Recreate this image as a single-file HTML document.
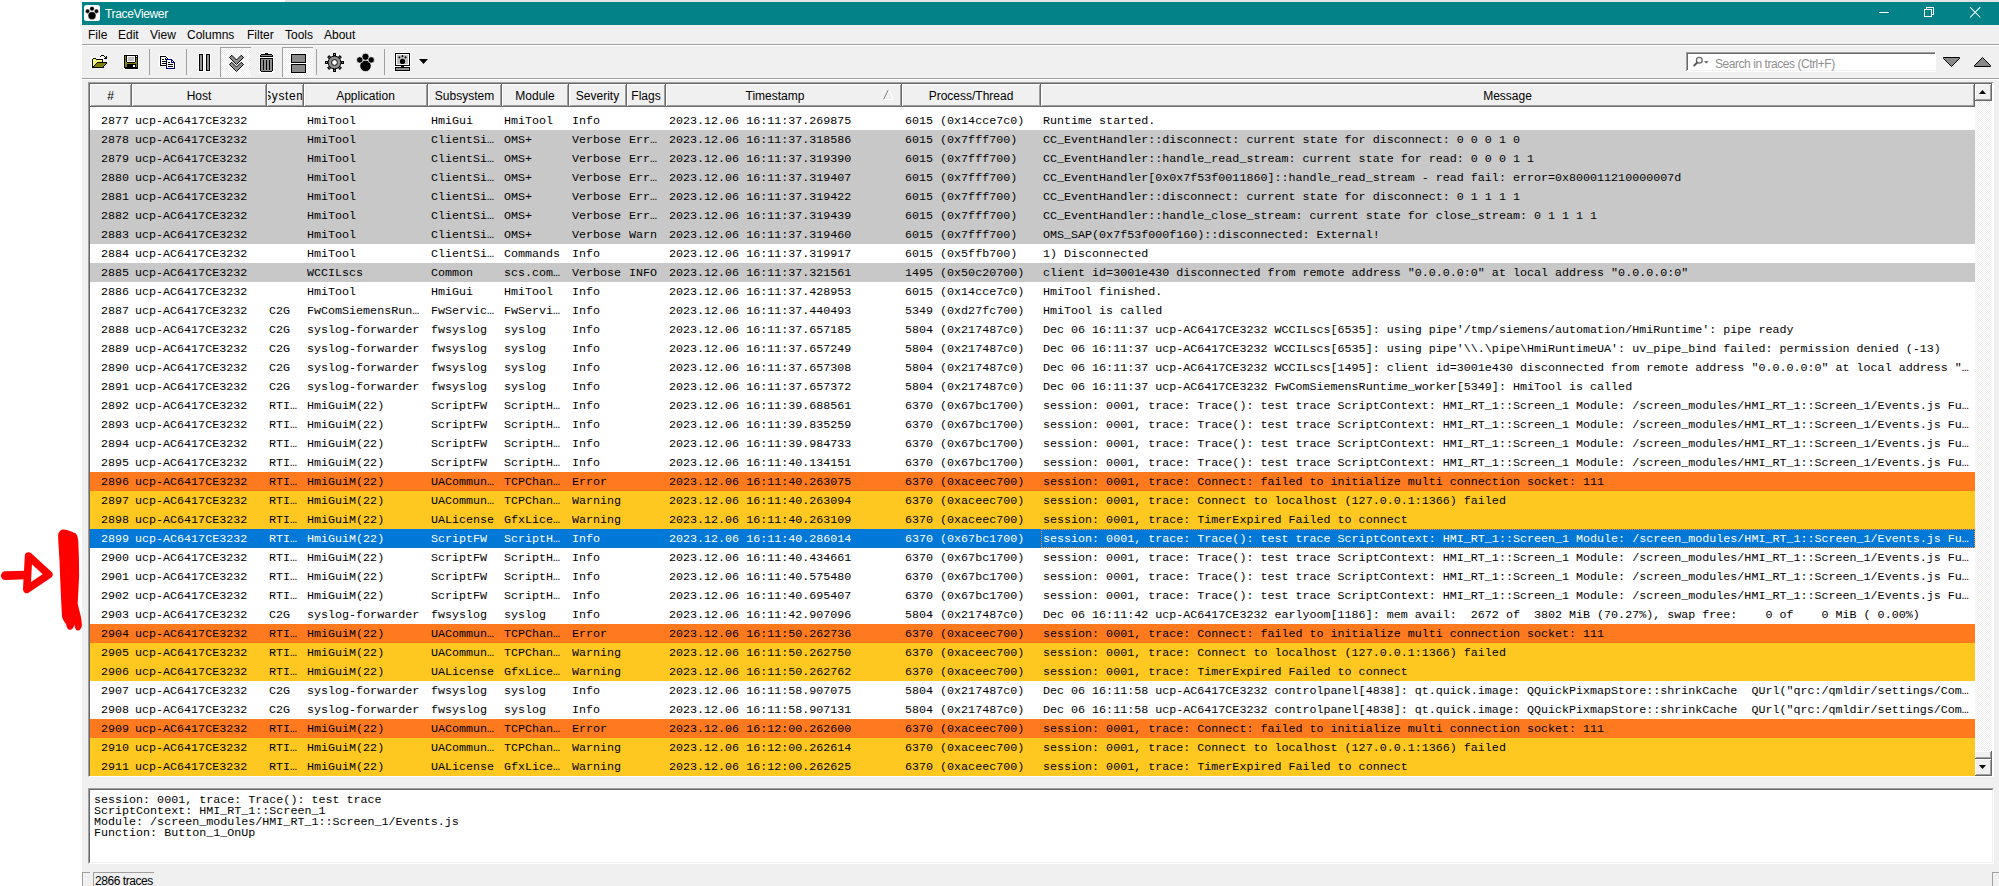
<!DOCTYPE html>
<html><head><meta charset="utf-8"><style>
*{margin:0;padding:0;box-sizing:border-box}
html,body{width:1999px;height:886px;overflow:hidden;background:#fff;position:relative}
body{font-family:"Liberation Sans",sans-serif;font-size:12px;color:#000}
.a{position:absolute}
.mono{font-family:"Liberation Mono",monospace;font-size:11.69px;white-space:pre}
.hc{position:absolute;top:84px;height:22px;background:#f0f0f0;border-top:1px solid #fff;border-left:1px solid #fff;box-shadow:inset -1px -1px 0 #a0a0a0;}
.ht{position:absolute;left:0;right:0;top:4px;text-align:center;white-space:nowrap;overflow:hidden;line-height:14px}
.row{position:absolute;left:90px;width:1885px;height:19px}
.row span{position:absolute;top:1px;line-height:19px;overflow:hidden}
.w{background:#fff}.g{background:#c8c8c8}.o{background:#ff7a1f}.y{background:#ffc820}.s{background:#0078d7;color:#fff}
.mi{position:absolute;top:28px;line-height:14px}
</style></head><body>

<div class="a" style="left:285px;top:0;width:1714px;height:2px;background:#e4e4e6"></div>
<div class="a" style="left:82px;top:2px;width:1917px;height:884px;background:#f0f0f0"></div>
<div class="a" style="left:82px;top:2px;width:1917px;height:23px;background:#038387"></div>
<div class="a" style="left:105px;top:6px;color:#fff;line-height:16px;letter-spacing:-0.35px">TraceViewer</div>
<div class="mi" style="left:88px">File</div>
<div class="mi" style="left:118px">Edit</div>
<div class="mi" style="left:150px">View</div>
<div class="mi" style="left:187px">Columns</div>
<div class="mi" style="left:247px">Filter</div>
<div class="mi" style="left:285px">Tools</div>
<div class="mi" style="left:324px">About</div>
<div class="a" style="left:82px;top:44px;width:1917px;height:1px;background:#a0a0a0"></div>
<div class="a" style="left:82px;top:45px;width:1917px;height:1px;background:#fff"></div>
<div class="a" style="left:82px;top:78px;width:1917px;height:1px;background:#a0a0a0"></div>
<div class="a" style="left:82px;top:79px;width:1917px;height:1px;background:#fff"></div>
<div class="a" style="left:88px;top:82px;width:1906px;height:695px;background:#fff;border-top:1px solid #a0a0a0;border-left:1px solid #a0a0a0;border-right:1px solid #fff;border-bottom:1px solid #fff"></div>
<div class="a" style="left:89px;top:83px;width:1903px;height:693px;border-top:1px solid #696969;border-left:1px solid #696969"></div>
<div class="hc" style="left:90px;width:41px;"></div>
<div class="a" style="left:91px;top:85px;width:39px;height:20px;overflow:hidden"><div class="ht" style="top:4px;left:-60px;right:-60px;">#</div></div>
<div class="a" style="left:131px;top:83px;width:1px;height:24px;background:#696969"></div>
<div class="hc" style="left:132px;width:134px;"></div>
<div class="a" style="left:133px;top:85px;width:132px;height:20px;overflow:hidden"><div class="ht" style="top:4px;left:-60px;right:-60px;">Host</div></div>
<div class="a" style="left:266px;top:83px;width:1px;height:24px;background:#696969"></div>
<div class="hc" style="left:267px;width:36px;"></div>
<div class="a" style="left:268px;top:85px;width:34px;height:20px;overflow:hidden"><div class="ht" style="top:4px;left:-60px;right:-60px;letter-spacing:0.6px;">System</div></div>
<div class="a" style="left:303px;top:83px;width:1px;height:24px;background:#696969"></div>
<div class="hc" style="left:304px;width:123px;"></div>
<div class="a" style="left:305px;top:85px;width:121px;height:20px;overflow:hidden"><div class="ht" style="top:4px;left:-60px;right:-60px;">Application</div></div>
<div class="a" style="left:427px;top:83px;width:1px;height:24px;background:#696969"></div>
<div class="hc" style="left:428px;width:73px;"></div>
<div class="a" style="left:429px;top:85px;width:71px;height:20px;overflow:hidden"><div class="ht" style="top:4px;left:-60px;right:-60px;">Subsystem</div></div>
<div class="a" style="left:501px;top:83px;width:1px;height:24px;background:#696969"></div>
<div class="hc" style="left:502px;width:66px;"></div>
<div class="a" style="left:503px;top:85px;width:64px;height:20px;overflow:hidden"><div class="ht" style="top:4px;left:-60px;right:-60px;">Module</div></div>
<div class="a" style="left:568px;top:83px;width:1px;height:24px;background:#696969"></div>
<div class="hc" style="left:569px;width:57px;"></div>
<div class="a" style="left:570px;top:85px;width:55px;height:20px;overflow:hidden"><div class="ht" style="top:4px;left:-60px;right:-60px;">Severity</div></div>
<div class="a" style="left:626px;top:83px;width:1px;height:24px;background:#696969"></div>
<div class="hc" style="left:627px;width:38px;"></div>
<div class="a" style="left:628px;top:85px;width:36px;height:20px;overflow:hidden"><div class="ht" style="top:4px;left:-60px;right:-60px;">Flags</div></div>
<div class="a" style="left:665px;top:83px;width:1px;height:24px;background:#696969"></div>
<div class="hc" style="left:666px;width:235px;"></div>
<div class="a" style="left:667px;top:85px;width:216px;height:20px;overflow:hidden"><div class="ht" style="top:4px;left:-60px;right:-60px;">Timestamp</div></div>
<div class="a" style="left:901px;top:83px;width:1px;height:24px;background:#696969"></div>
<div class="hc" style="left:902px;width:138px;"></div>
<div class="a" style="left:903px;top:85px;width:136px;height:20px;overflow:hidden"><div class="ht" style="top:4px;left:-60px;right:-60px;">Process/Thread</div></div>
<div class="a" style="left:1040px;top:83px;width:1px;height:24px;background:#696969"></div>
<div class="hc" style="left:1041px;width:933px;"></div>
<div class="a" style="left:1042px;top:85px;width:931px;height:20px;overflow:hidden"><div class="ht" style="top:4px;left:-60px;right:-60px;">Message</div></div>
<div class="a" style="left:1974px;top:83px;width:1px;height:24px;background:#696969"></div>
<div class="a" style="left:90px;top:106px;width:1885px;height:1px;background:#696969"></div>
<div class="row mono w" style="top:111px"><span style="left:11px;width:29px">2877</span><span style="left:45px;width:130px">ucp-AC6417CE3232</span><span style="left:217px;width:119px">HmiTool</span><span style="left:341px;width:69px">HmiGui</span><span style="left:414px;width:63px">HmiTool</span><span style="left:482px;width:53px">Info</span><span style="left:579px;width:231px">2023.12.06 16:11:37.269875</span><span style="left:815px;width:134px">6015 (0x14cce7c0)</span><span style="left:953px;width:930px">Runtime started.</span></div>
<div class="row mono g" style="top:130px"><span style="left:11px;width:29px">2878</span><span style="left:45px;width:130px">ucp-AC6417CE3232</span><span style="left:217px;width:119px">HmiTool</span><span style="left:341px;width:69px">ClientSi…</span><span style="left:414px;width:63px">OMS+</span><span style="left:482px;width:53px">Verbose</span><span style="left:539px;width:35px">Err…</span><span style="left:579px;width:231px">2023.12.06 16:11:37.318586</span><span style="left:815px;width:134px">6015 (0x7fff700)</span><span style="left:953px;width:930px">CC_EventHandler::disconnect: current state for disconnect: 0 0 0 1 0</span></div>
<div class="row mono g" style="top:149px"><span style="left:11px;width:29px">2879</span><span style="left:45px;width:130px">ucp-AC6417CE3232</span><span style="left:217px;width:119px">HmiTool</span><span style="left:341px;width:69px">ClientSi…</span><span style="left:414px;width:63px">OMS+</span><span style="left:482px;width:53px">Verbose</span><span style="left:539px;width:35px">Err…</span><span style="left:579px;width:231px">2023.12.06 16:11:37.319390</span><span style="left:815px;width:134px">6015 (0x7fff700)</span><span style="left:953px;width:930px">CC_EventHandler::handle_read_stream: current state for read: 0 0 0 1 1</span></div>
<div class="row mono g" style="top:168px"><span style="left:11px;width:29px">2880</span><span style="left:45px;width:130px">ucp-AC6417CE3232</span><span style="left:217px;width:119px">HmiTool</span><span style="left:341px;width:69px">ClientSi…</span><span style="left:414px;width:63px">OMS+</span><span style="left:482px;width:53px">Verbose</span><span style="left:539px;width:35px">Err…</span><span style="left:579px;width:231px">2023.12.06 16:11:37.319407</span><span style="left:815px;width:134px">6015 (0x7fff700)</span><span style="left:953px;width:930px">CC_EventHandler[0x0x7f53f0011860]::handle_read_stream - read fail: error=0x800011210000007d</span></div>
<div class="row mono g" style="top:187px"><span style="left:11px;width:29px">2881</span><span style="left:45px;width:130px">ucp-AC6417CE3232</span><span style="left:217px;width:119px">HmiTool</span><span style="left:341px;width:69px">ClientSi…</span><span style="left:414px;width:63px">OMS+</span><span style="left:482px;width:53px">Verbose</span><span style="left:539px;width:35px">Err…</span><span style="left:579px;width:231px">2023.12.06 16:11:37.319422</span><span style="left:815px;width:134px">6015 (0x7fff700)</span><span style="left:953px;width:930px">CC_EventHandler::disconnect: current state for disconnect: 0 1 1 1 1</span></div>
<div class="row mono g" style="top:206px"><span style="left:11px;width:29px">2882</span><span style="left:45px;width:130px">ucp-AC6417CE3232</span><span style="left:217px;width:119px">HmiTool</span><span style="left:341px;width:69px">ClientSi…</span><span style="left:414px;width:63px">OMS+</span><span style="left:482px;width:53px">Verbose</span><span style="left:539px;width:35px">Err…</span><span style="left:579px;width:231px">2023.12.06 16:11:37.319439</span><span style="left:815px;width:134px">6015 (0x7fff700)</span><span style="left:953px;width:930px">CC_EventHandler::handle_close_stream: current state for close_stream: 0 1 1 1 1</span></div>
<div class="row mono g" style="top:225px"><span style="left:11px;width:29px">2883</span><span style="left:45px;width:130px">ucp-AC6417CE3232</span><span style="left:217px;width:119px">HmiTool</span><span style="left:341px;width:69px">ClientSi…</span><span style="left:414px;width:63px">OMS+</span><span style="left:482px;width:53px">Verbose</span><span style="left:539px;width:35px">Warn</span><span style="left:579px;width:231px">2023.12.06 16:11:37.319460</span><span style="left:815px;width:134px">6015 (0x7fff700)</span><span style="left:953px;width:930px">OMS_SAP(0x7f53f000f160)::disconnected: External!</span></div>
<div class="row mono w" style="top:244px"><span style="left:11px;width:29px">2884</span><span style="left:45px;width:130px">ucp-AC6417CE3232</span><span style="left:217px;width:119px">HmiTool</span><span style="left:341px;width:69px">ClientSi…</span><span style="left:414px;width:63px">Commands</span><span style="left:482px;width:53px">Info</span><span style="left:579px;width:231px">2023.12.06 16:11:37.319917</span><span style="left:815px;width:134px">6015 (0x5ffb700)</span><span style="left:953px;width:930px">1) Disconnected</span></div>
<div class="row mono g" style="top:263px"><span style="left:11px;width:29px">2885</span><span style="left:45px;width:130px">ucp-AC6417CE3232</span><span style="left:217px;width:119px">WCCILscs</span><span style="left:341px;width:69px">Common</span><span style="left:414px;width:63px">scs.com…</span><span style="left:482px;width:53px">Verbose</span><span style="left:539px;width:35px">INFO</span><span style="left:579px;width:231px">2023.12.06 16:11:37.321561</span><span style="left:815px;width:134px">1495 (0x50c20700)</span><span style="left:953px;width:930px">client id=3001e430 disconnected from remote address "0.0.0.0:0" at local address "0.0.0.0:0"</span></div>
<div class="row mono w" style="top:282px"><span style="left:11px;width:29px">2886</span><span style="left:45px;width:130px">ucp-AC6417CE3232</span><span style="left:217px;width:119px">HmiTool</span><span style="left:341px;width:69px">HmiGui</span><span style="left:414px;width:63px">HmiTool</span><span style="left:482px;width:53px">Info</span><span style="left:579px;width:231px">2023.12.06 16:11:37.428953</span><span style="left:815px;width:134px">6015 (0x14cce7c0)</span><span style="left:953px;width:930px">HmiTool finished.</span></div>
<div class="row mono w" style="top:301px"><span style="left:11px;width:29px">2887</span><span style="left:45px;width:130px">ucp-AC6417CE3232</span><span style="left:179px;width:33px">C2G</span><span style="left:217px;width:119px">FwComSiemensRun…</span><span style="left:341px;width:69px">FwServic…</span><span style="left:414px;width:63px">FwServi…</span><span style="left:482px;width:53px">Info</span><span style="left:579px;width:231px">2023.12.06 16:11:37.440493</span><span style="left:815px;width:134px">5349 (0xd27fc700)</span><span style="left:953px;width:930px">HmiTool is called</span></div>
<div class="row mono w" style="top:320px"><span style="left:11px;width:29px">2888</span><span style="left:45px;width:130px">ucp-AC6417CE3232</span><span style="left:179px;width:33px">C2G</span><span style="left:217px;width:119px">syslog-forwarder</span><span style="left:341px;width:69px">fwsyslog</span><span style="left:414px;width:63px">syslog</span><span style="left:482px;width:53px">Info</span><span style="left:579px;width:231px">2023.12.06 16:11:37.657185</span><span style="left:815px;width:134px">5804 (0x217487c0)</span><span style="left:953px;width:930px">Dec 06 16:11:37 ucp-AC6417CE3232 WCCILscs[6535]: using pipe'/tmp/siemens/automation/HmiRuntime': pipe ready</span></div>
<div class="row mono w" style="top:339px"><span style="left:11px;width:29px">2889</span><span style="left:45px;width:130px">ucp-AC6417CE3232</span><span style="left:179px;width:33px">C2G</span><span style="left:217px;width:119px">syslog-forwarder</span><span style="left:341px;width:69px">fwsyslog</span><span style="left:414px;width:63px">syslog</span><span style="left:482px;width:53px">Info</span><span style="left:579px;width:231px">2023.12.06 16:11:37.657249</span><span style="left:815px;width:134px">5804 (0x217487c0)</span><span style="left:953px;width:930px">Dec 06 16:11:37 ucp-AC6417CE3232 WCCILscs[6535]: using pipe'\\.\pipe\HmiRuntimeUA': uv_pipe_bind failed: permission denied (-13)</span></div>
<div class="row mono w" style="top:358px"><span style="left:11px;width:29px">2890</span><span style="left:45px;width:130px">ucp-AC6417CE3232</span><span style="left:179px;width:33px">C2G</span><span style="left:217px;width:119px">syslog-forwarder</span><span style="left:341px;width:69px">fwsyslog</span><span style="left:414px;width:63px">syslog</span><span style="left:482px;width:53px">Info</span><span style="left:579px;width:231px">2023.12.06 16:11:37.657308</span><span style="left:815px;width:134px">5804 (0x217487c0)</span><span style="left:953px;width:930px">Dec 06 16:11:37 ucp-AC6417CE3232 WCCILscs[1495]: client id=3001e430 disconnected from remote address "0.0.0.0:0" at local address "…</span></div>
<div class="row mono w" style="top:377px"><span style="left:11px;width:29px">2891</span><span style="left:45px;width:130px">ucp-AC6417CE3232</span><span style="left:179px;width:33px">C2G</span><span style="left:217px;width:119px">syslog-forwarder</span><span style="left:341px;width:69px">fwsyslog</span><span style="left:414px;width:63px">syslog</span><span style="left:482px;width:53px">Info</span><span style="left:579px;width:231px">2023.12.06 16:11:37.657372</span><span style="left:815px;width:134px">5804 (0x217487c0)</span><span style="left:953px;width:930px">Dec 06 16:11:37 ucp-AC6417CE3232 FwComSiemensRuntime_worker[5349]: HmiTool is called</span></div>
<div class="row mono w" style="top:396px"><span style="left:11px;width:29px">2892</span><span style="left:45px;width:130px">ucp-AC6417CE3232</span><span style="left:179px;width:33px">RTI…</span><span style="left:217px;width:119px">HmiGuiM(22)</span><span style="left:341px;width:69px">ScriptFW</span><span style="left:414px;width:63px">ScriptH…</span><span style="left:482px;width:53px">Info</span><span style="left:579px;width:231px">2023.12.06 16:11:39.688561</span><span style="left:815px;width:134px">6370 (0x67bc1700)</span><span style="left:953px;width:930px">session: 0001, trace: Trace(): test trace ScriptContext: HMI_RT_1::Screen_1 Module: /screen_modules/HMI_RT_1::Screen_1/Events.js Fu…</span></div>
<div class="row mono w" style="top:415px"><span style="left:11px;width:29px">2893</span><span style="left:45px;width:130px">ucp-AC6417CE3232</span><span style="left:179px;width:33px">RTI…</span><span style="left:217px;width:119px">HmiGuiM(22)</span><span style="left:341px;width:69px">ScriptFW</span><span style="left:414px;width:63px">ScriptH…</span><span style="left:482px;width:53px">Info</span><span style="left:579px;width:231px">2023.12.06 16:11:39.835259</span><span style="left:815px;width:134px">6370 (0x67bc1700)</span><span style="left:953px;width:930px">session: 0001, trace: Trace(): test trace ScriptContext: HMI_RT_1::Screen_1 Module: /screen_modules/HMI_RT_1::Screen_1/Events.js Fu…</span></div>
<div class="row mono w" style="top:434px"><span style="left:11px;width:29px">2894</span><span style="left:45px;width:130px">ucp-AC6417CE3232</span><span style="left:179px;width:33px">RTI…</span><span style="left:217px;width:119px">HmiGuiM(22)</span><span style="left:341px;width:69px">ScriptFW</span><span style="left:414px;width:63px">ScriptH…</span><span style="left:482px;width:53px">Info</span><span style="left:579px;width:231px">2023.12.06 16:11:39.984733</span><span style="left:815px;width:134px">6370 (0x67bc1700)</span><span style="left:953px;width:930px">session: 0001, trace: Trace(): test trace ScriptContext: HMI_RT_1::Screen_1 Module: /screen_modules/HMI_RT_1::Screen_1/Events.js Fu…</span></div>
<div class="row mono w" style="top:453px"><span style="left:11px;width:29px">2895</span><span style="left:45px;width:130px">ucp-AC6417CE3232</span><span style="left:179px;width:33px">RTI…</span><span style="left:217px;width:119px">HmiGuiM(22)</span><span style="left:341px;width:69px">ScriptFW</span><span style="left:414px;width:63px">ScriptH…</span><span style="left:482px;width:53px">Info</span><span style="left:579px;width:231px">2023.12.06 16:11:40.134151</span><span style="left:815px;width:134px">6370 (0x67bc1700)</span><span style="left:953px;width:930px">session: 0001, trace: Trace(): test trace ScriptContext: HMI_RT_1::Screen_1 Module: /screen_modules/HMI_RT_1::Screen_1/Events.js Fu…</span></div>
<div class="row mono o" style="top:472px"><span style="left:11px;width:29px">2896</span><span style="left:45px;width:130px">ucp-AC6417CE3232</span><span style="left:179px;width:33px">RTI…</span><span style="left:217px;width:119px">HmiGuiM(22)</span><span style="left:341px;width:69px">UACommun…</span><span style="left:414px;width:63px">TCPChan…</span><span style="left:482px;width:53px">Error</span><span style="left:579px;width:231px">2023.12.06 16:11:40.263075</span><span style="left:815px;width:134px">6370 (0xaceec700)</span><span style="left:953px;width:930px">session: 0001, trace: Connect: failed to initialize multi connection socket: 111</span></div>
<div class="row mono y" style="top:491px"><span style="left:11px;width:29px">2897</span><span style="left:45px;width:130px">ucp-AC6417CE3232</span><span style="left:179px;width:33px">RTI…</span><span style="left:217px;width:119px">HmiGuiM(22)</span><span style="left:341px;width:69px">UACommun…</span><span style="left:414px;width:63px">TCPChan…</span><span style="left:482px;width:53px">Warning</span><span style="left:579px;width:231px">2023.12.06 16:11:40.263094</span><span style="left:815px;width:134px">6370 (0xaceec700)</span><span style="left:953px;width:930px">session: 0001, trace: Connect to localhost (127.0.0.1:1366) failed</span></div>
<div class="row mono y" style="top:510px"><span style="left:11px;width:29px">2898</span><span style="left:45px;width:130px">ucp-AC6417CE3232</span><span style="left:179px;width:33px">RTI…</span><span style="left:217px;width:119px">HmiGuiM(22)</span><span style="left:341px;width:69px">UALicense</span><span style="left:414px;width:63px">GfxLice…</span><span style="left:482px;width:53px">Warning</span><span style="left:579px;width:231px">2023.12.06 16:11:40.263109</span><span style="left:815px;width:134px">6370 (0xaceec700)</span><span style="left:953px;width:930px">session: 0001, trace: TimerExpired Failed to connect</span></div>
<div class="row mono s" style="top:529px"><span style="left:11px;width:29px">2899</span><span style="left:45px;width:130px">ucp-AC6417CE3232</span><span style="left:179px;width:33px">RTI…</span><span style="left:217px;width:119px">HmiGuiM(22)</span><span style="left:341px;width:69px">ScriptFW</span><span style="left:414px;width:63px">ScriptH…</span><span style="left:482px;width:53px">Info</span><span style="left:579px;width:231px">2023.12.06 16:11:40.286014</span><span style="left:815px;width:134px">6370 (0x67bc1700)</span><span style="left:953px;width:930px">session: 0001, trace: Trace(): test trace ScriptContext: HMI_RT_1::Screen_1 Module: /screen_modules/HMI_RT_1::Screen_1/Events.js Fu…</span></div>
<div class="row mono w" style="top:548px"><span style="left:11px;width:29px">2900</span><span style="left:45px;width:130px">ucp-AC6417CE3232</span><span style="left:179px;width:33px">RTI…</span><span style="left:217px;width:119px">HmiGuiM(22)</span><span style="left:341px;width:69px">ScriptFW</span><span style="left:414px;width:63px">ScriptH…</span><span style="left:482px;width:53px">Info</span><span style="left:579px;width:231px">2023.12.06 16:11:40.434661</span><span style="left:815px;width:134px">6370 (0x67bc1700)</span><span style="left:953px;width:930px">session: 0001, trace: Trace(): test trace ScriptContext: HMI_RT_1::Screen_1 Module: /screen_modules/HMI_RT_1::Screen_1/Events.js Fu…</span></div>
<div class="row mono w" style="top:567px"><span style="left:11px;width:29px">2901</span><span style="left:45px;width:130px">ucp-AC6417CE3232</span><span style="left:179px;width:33px">RTI…</span><span style="left:217px;width:119px">HmiGuiM(22)</span><span style="left:341px;width:69px">ScriptFW</span><span style="left:414px;width:63px">ScriptH…</span><span style="left:482px;width:53px">Info</span><span style="left:579px;width:231px">2023.12.06 16:11:40.575480</span><span style="left:815px;width:134px">6370 (0x67bc1700)</span><span style="left:953px;width:930px">session: 0001, trace: Trace(): test trace ScriptContext: HMI_RT_1::Screen_1 Module: /screen_modules/HMI_RT_1::Screen_1/Events.js Fu…</span></div>
<div class="row mono w" style="top:586px"><span style="left:11px;width:29px">2902</span><span style="left:45px;width:130px">ucp-AC6417CE3232</span><span style="left:179px;width:33px">RTI…</span><span style="left:217px;width:119px">HmiGuiM(22)</span><span style="left:341px;width:69px">ScriptFW</span><span style="left:414px;width:63px">ScriptH…</span><span style="left:482px;width:53px">Info</span><span style="left:579px;width:231px">2023.12.06 16:11:40.695407</span><span style="left:815px;width:134px">6370 (0x67bc1700)</span><span style="left:953px;width:930px">session: 0001, trace: Trace(): test trace ScriptContext: HMI_RT_1::Screen_1 Module: /screen_modules/HMI_RT_1::Screen_1/Events.js Fu…</span></div>
<div class="row mono w" style="top:605px"><span style="left:11px;width:29px">2903</span><span style="left:45px;width:130px">ucp-AC6417CE3232</span><span style="left:179px;width:33px">C2G</span><span style="left:217px;width:119px">syslog-forwarder</span><span style="left:341px;width:69px">fwsyslog</span><span style="left:414px;width:63px">syslog</span><span style="left:482px;width:53px">Info</span><span style="left:579px;width:231px">2023.12.06 16:11:42.907096</span><span style="left:815px;width:134px">5804 (0x217487c0)</span><span style="left:953px;width:930px">Dec 06 16:11:42 ucp-AC6417CE3232 earlyoom[1186]: mem avail:  2672 of  3802 MiB (70.27%), swap free:    0 of    0 MiB ( 0.00%)</span></div>
<div class="row mono o" style="top:624px"><span style="left:11px;width:29px">2904</span><span style="left:45px;width:130px">ucp-AC6417CE3232</span><span style="left:179px;width:33px">RTI…</span><span style="left:217px;width:119px">HmiGuiM(22)</span><span style="left:341px;width:69px">UACommun…</span><span style="left:414px;width:63px">TCPChan…</span><span style="left:482px;width:53px">Error</span><span style="left:579px;width:231px">2023.12.06 16:11:50.262736</span><span style="left:815px;width:134px">6370 (0xaceec700)</span><span style="left:953px;width:930px">session: 0001, trace: Connect: failed to initialize multi connection socket: 111</span></div>
<div class="row mono y" style="top:643px"><span style="left:11px;width:29px">2905</span><span style="left:45px;width:130px">ucp-AC6417CE3232</span><span style="left:179px;width:33px">RTI…</span><span style="left:217px;width:119px">HmiGuiM(22)</span><span style="left:341px;width:69px">UACommun…</span><span style="left:414px;width:63px">TCPChan…</span><span style="left:482px;width:53px">Warning</span><span style="left:579px;width:231px">2023.12.06 16:11:50.262750</span><span style="left:815px;width:134px">6370 (0xaceec700)</span><span style="left:953px;width:930px">session: 0001, trace: Connect to localhost (127.0.0.1:1366) failed</span></div>
<div class="row mono y" style="top:662px"><span style="left:11px;width:29px">2906</span><span style="left:45px;width:130px">ucp-AC6417CE3232</span><span style="left:179px;width:33px">RTI…</span><span style="left:217px;width:119px">HmiGuiM(22)</span><span style="left:341px;width:69px">UALicense</span><span style="left:414px;width:63px">GfxLice…</span><span style="left:482px;width:53px">Warning</span><span style="left:579px;width:231px">2023.12.06 16:11:50.262762</span><span style="left:815px;width:134px">6370 (0xaceec700)</span><span style="left:953px;width:930px">session: 0001, trace: TimerExpired Failed to connect</span></div>
<div class="row mono w" style="top:681px"><span style="left:11px;width:29px">2907</span><span style="left:45px;width:130px">ucp-AC6417CE3232</span><span style="left:179px;width:33px">C2G</span><span style="left:217px;width:119px">syslog-forwarder</span><span style="left:341px;width:69px">fwsyslog</span><span style="left:414px;width:63px">syslog</span><span style="left:482px;width:53px">Info</span><span style="left:579px;width:231px">2023.12.06 16:11:58.907075</span><span style="left:815px;width:134px">5804 (0x217487c0)</span><span style="left:953px;width:930px">Dec 06 16:11:58 ucp-AC6417CE3232 controlpanel[4838]: qt.quick.image: QQuickPixmapStore::shrinkCache  QUrl("qrc:/qmldir/settings/Com…</span></div>
<div class="row mono w" style="top:700px"><span style="left:11px;width:29px">2908</span><span style="left:45px;width:130px">ucp-AC6417CE3232</span><span style="left:179px;width:33px">C2G</span><span style="left:217px;width:119px">syslog-forwarder</span><span style="left:341px;width:69px">fwsyslog</span><span style="left:414px;width:63px">syslog</span><span style="left:482px;width:53px">Info</span><span style="left:579px;width:231px">2023.12.06 16:11:58.907131</span><span style="left:815px;width:134px">5804 (0x217487c0)</span><span style="left:953px;width:930px">Dec 06 16:11:58 ucp-AC6417CE3232 controlpanel[4838]: qt.quick.image: QQuickPixmapStore::shrinkCache  QUrl("qrc:/qmldir/settings/Com…</span></div>
<div class="row mono o" style="top:719px"><span style="left:11px;width:29px">2909</span><span style="left:45px;width:130px">ucp-AC6417CE3232</span><span style="left:179px;width:33px">RTI…</span><span style="left:217px;width:119px">HmiGuiM(22)</span><span style="left:341px;width:69px">UACommun…</span><span style="left:414px;width:63px">TCPChan…</span><span style="left:482px;width:53px">Error</span><span style="left:579px;width:231px">2023.12.06 16:12:00.262600</span><span style="left:815px;width:134px">6370 (0xaceec700)</span><span style="left:953px;width:930px">session: 0001, trace: Connect: failed to initialize multi connection socket: 111</span></div>
<div class="row mono y" style="top:738px"><span style="left:11px;width:29px">2910</span><span style="left:45px;width:130px">ucp-AC6417CE3232</span><span style="left:179px;width:33px">RTI…</span><span style="left:217px;width:119px">HmiGuiM(22)</span><span style="left:341px;width:69px">UACommun…</span><span style="left:414px;width:63px">TCPChan…</span><span style="left:482px;width:53px">Warning</span><span style="left:579px;width:231px">2023.12.06 16:12:00.262614</span><span style="left:815px;width:134px">6370 (0xaceec700)</span><span style="left:953px;width:930px">session: 0001, trace: Connect to localhost (127.0.0.1:1366) failed</span></div>
<div class="row mono y" style="top:757px"><span style="left:11px;width:29px">2911</span><span style="left:45px;width:130px">ucp-AC6417CE3232</span><span style="left:179px;width:33px">RTI…</span><span style="left:217px;width:119px">HmiGuiM(22)</span><span style="left:341px;width:69px">UALicense</span><span style="left:414px;width:63px">GfxLice…</span><span style="left:482px;width:53px">Warning</span><span style="left:579px;width:231px">2023.12.06 16:12:00.262625</span><span style="left:815px;width:134px">6370 (0xaceec700)</span><span style="left:953px;width:930px">session: 0001, trace: TimerExpired Failed to connect</span></div>
<div class="a" style="left:1041px;top:529px;width:934px;height:19px;border:1px dotted #ff8a28"></div>
<div class="a" style="left:88px;top:788px;width:1906px;height:76px;background:#fff;border-top:1px solid #a0a0a0;border-left:1px solid #a0a0a0;border-right:1px solid #fff;border-bottom:1px solid #fff"></div>
<div class="a" style="left:89px;top:789px;width:1904px;height:74px;border-top:1px solid #696969;border-left:1px solid #696969;border-right:1px solid #f0f0f0;border-bottom:1px solid #f0f0f0"></div>
<div class="a mono" style="left:94px;top:795px;line-height:11px">session: 0001, trace: Trace(): test trace
ScriptContext: HMI_RT_1::Screen_1
Module: /screen_modules/HMI_RT_1::Screen_1/Events.js
Function: Button_1_OnUp</div>
<div class="a" style="left:82px;top:872px;width:8px;height:14px;border-top:1px solid #a0a0a0;border-left:1px solid #a0a0a0"></div>
<div class="a" style="left:93px;top:872px;width:61px;height:14px;border-top:1px solid #a0a0a0;border-left:1px solid #a0a0a0"></div>
<div class="a" style="left:95px;top:874px;line-height:14px;letter-spacing:-0.45px">2866 traces</div>
<div class="a" style="left:1992px;top:872px;width:8px;height:14px;border-top:1px solid #a0a0a0;border-left:1px solid #a0a0a0"></div>
<svg class="a" style="left:0;top:0" width="1999" height="886" viewBox="0 0 1999 886"><defs><pattern id="ydith" width="2" height="2" patternUnits="userSpaceOnUse"><rect width="2" height="2" fill="#ffff00"/><rect x="1" y="0" width="1" height="1" fill="#fff"/><rect x="0" y="1" width="1" height="1" fill="#fff"/></pattern><pattern id="dith" width="2" height="2" patternUnits="userSpaceOnUse"><rect width="2" height="2" fill="#fff"/><rect width="1" height="1" fill="#eeeeee"/><rect x="1" y="1" width="1" height="1" fill="#eeeeee"/></pattern></defs><rect x="84" y="5" width="16" height="16" rx="2.5" fill="#fff"/><g fill="#000" stroke="#fff" stroke-width="0.5"><circle cx="92" cy="15.7" r="4"/><circle cx="92" cy="8.7" r="2.3"/><circle cx="87.6" cy="11.2" r="2.2"/><circle cx="96.4" cy="11.2" r="2.2"/></g><rect x="1879" y="12" width="10" height="1" fill="#fff"/><g fill="none" stroke="#fff" stroke-width="1" shape-rendering="crispEdges"><rect x="1924.5" y="9.5" width="7" height="7"/><path d="M1926.5 9V7.5H1933.5V14.5H1932"/></g><path d="M1970 7.2L1980.3 17.5M1980.3 7.2L1970 17.5" stroke="#fff" stroke-width="1.05" fill="none"/><g shape-rendering="crispEdges"><path d="M91 57h5v1h4v-3h4v2h3v3h-4v1h4v2l-4 5h-12z" fill="#fff" opacity="0.85"/><rect x="101" y="55" width="3" height="1" fill="#000"/><rect x="100" y="56" width="1" height="1" fill="#000"/><rect x="104" y="56" width="1" height="1" fill="#000"/><rect x="106" y="56" width="1" height="1" fill="#000"/><rect x="105" y="57" width="2" height="1" fill="#000"/><rect x="93" y="58" width="3" height="1" fill="#000"/><rect x="104" y="58" width="3" height="1" fill="#000"/><rect x="92" y="59" width="1" height="1" fill="#000"/><rect x="93" y="59" width="3" height="1" fill="url(#ydith)"/><rect x="96" y="59" width="7" height="1" fill="#000"/><rect x="92" y="60" width="1" height="1" fill="#000"/><rect x="93" y="60" width="9" height="1" fill="url(#ydith)"/><rect x="102" y="60" width="1" height="1" fill="#000"/><rect x="92" y="61" width="1" height="1" fill="#000"/><rect x="93" y="61" width="9" height="1" fill="url(#ydith)"/><rect x="102" y="61" width="1" height="1" fill="#000"/><rect x="92" y="62" width="1" height="1" fill="#000"/><rect x="93" y="62" width="4" height="1" fill="url(#ydith)"/><rect x="97" y="62" width="10" height="1" fill="#000"/><rect x="92" y="63" width="1" height="1" fill="#000"/><rect x="93" y="63" width="3" height="1" fill="url(#ydith)"/><rect x="96" y="63" width="1" height="1" fill="#000"/><rect x="97" y="63" width="9" height="1" fill="#808000"/><rect x="106" y="63" width="1" height="1" fill="#000"/><rect x="92" y="64" width="1" height="1" fill="#000"/><rect x="93" y="64" width="2" height="1" fill="url(#ydith)"/><rect x="95" y="64" width="1" height="1" fill="#000"/><rect x="96" y="64" width="9" height="1" fill="#808000"/><rect x="105" y="64" width="1" height="1" fill="#000"/><rect x="92" y="65" width="1" height="1" fill="#000"/><rect x="93" y="65" width="1" height="1" fill="url(#ydith)"/><rect x="94" y="65" width="1" height="1" fill="#000"/><rect x="95" y="65" width="9" height="1" fill="#808000"/><rect x="104" y="65" width="1" height="1" fill="#000"/><rect x="92" y="66" width="2" height="1" fill="#000"/><rect x="94" y="66" width="9" height="1" fill="#808000"/><rect x="103" y="66" width="1" height="1" fill="#000"/><rect x="92" y="67" width="12" height="1" fill="#000"/></g><g shape-rendering="crispEdges"><rect x="123" y="54" width="16" height="16" fill="#fff"/><rect x="124" y="55" width="14" height="14" fill="#000"/><rect x="125" y="56" width="1" height="11" fill="#808000"/><rect x="126" y="62" width="1" height="5" fill="#808000"/><rect x="136" y="58" width="1" height="9" fill="#808000"/><rect x="135" y="62" width="1" height="2" fill="#808000"/><rect x="126" y="63" width="10" height="1" fill="#808000"/><rect x="127" y="56" width="8" height="6" fill="#fff"/><rect x="128" y="57" width="6" height="4" fill="#c0c0c0"/><rect x="136" y="56" width="1" height="1" fill="#fff"/><rect x="133" y="65" width="2" height="2" fill="#fff"/><rect x="124" y="68" width="1" height="1" fill="#fff"/></g><g shape-rendering="crispEdges"><path d="M159 55h8v1h1v1h1v1h3v1h1v1h1v1h1v1h1v8h-11v-3h-7z" fill="#fff" opacity="0.85"/><rect x="160" y="56" width="6" height="1" fill="#000"/><rect x="160" y="57" width="1" height="1" fill="#000"/><rect x="161" y="57" width="5" height="1" fill="#fff"/><rect x="166" y="57" width="1" height="1" fill="#000"/><rect x="160" y="58" width="1" height="1" fill="#000"/><rect x="161" y="58" width="4" height="1" fill="#fff"/><rect x="165" y="58" width="1" height="1" fill="#000"/><rect x="166" y="58" width="1" height="1" fill="#fff"/><rect x="167" y="58" width="1" height="1" fill="#000"/><rect x="160" y="59" width="1" height="1" fill="#000"/><rect x="161" y="59" width="1" height="1" fill="#fff"/><rect x="162" y="59" width="2" height="1" fill="#000"/><rect x="164" y="59" width="1" height="1" fill="#fff"/><rect x="165" y="59" width="1" height="1" fill="#000"/><rect x="166" y="59" width="6" height="1" fill="#000080"/><rect x="160" y="60" width="1" height="1" fill="#000"/><rect x="161" y="60" width="5" height="1" fill="#fff"/><rect x="166" y="60" width="1" height="1" fill="#000080"/><rect x="167" y="60" width="4" height="1" fill="#fff"/><rect x="171" y="60" width="2" height="1" fill="#000080"/><rect x="160" y="61" width="1" height="1" fill="#000"/><rect x="161" y="61" width="1" height="1" fill="#fff"/><rect x="162" y="61" width="4" height="1" fill="#000"/><rect x="166" y="61" width="1" height="1" fill="#000080"/><rect x="167" y="61" width="4" height="1" fill="#fff"/><rect x="171" y="61" width="1" height="1" fill="#000080"/><rect x="172" y="61" width="1" height="1" fill="#fff"/><rect x="173" y="61" width="1" height="1" fill="#000080"/><rect x="160" y="62" width="1" height="1" fill="#000"/><rect x="161" y="62" width="5" height="1" fill="#fff"/><rect x="166" y="62" width="1" height="1" fill="#000080"/><rect x="167" y="62" width="1" height="1" fill="#fff"/><rect x="168" y="62" width="2" height="1" fill="#000"/><rect x="170" y="62" width="1" height="1" fill="#fff"/><rect x="171" y="62" width="4" height="1" fill="#000080"/><rect x="160" y="63" width="1" height="1" fill="#000"/><rect x="161" y="63" width="1" height="1" fill="#fff"/><rect x="162" y="63" width="4" height="1" fill="#000"/><rect x="166" y="63" width="1" height="1" fill="#000080"/><rect x="167" y="63" width="7" height="1" fill="#fff"/><rect x="174" y="63" width="1" height="1" fill="#000080"/><rect x="160" y="64" width="1" height="1" fill="#000"/><rect x="161" y="64" width="5" height="1" fill="#fff"/><rect x="166" y="64" width="1" height="1" fill="#000080"/><rect x="167" y="64" width="1" height="1" fill="#fff"/><rect x="168" y="64" width="5" height="1" fill="#000"/><rect x="173" y="64" width="1" height="1" fill="#fff"/><rect x="174" y="64" width="1" height="1" fill="#000080"/><rect x="160" y="65" width="6" height="1" fill="#000"/><rect x="166" y="65" width="1" height="1" fill="#000080"/><rect x="167" y="65" width="7" height="1" fill="#fff"/><rect x="174" y="65" width="1" height="1" fill="#000080"/><rect x="166" y="66" width="1" height="1" fill="#000080"/><rect x="167" y="66" width="1" height="1" fill="#fff"/><rect x="168" y="66" width="5" height="1" fill="#000"/><rect x="173" y="66" width="1" height="1" fill="#fff"/><rect x="174" y="66" width="1" height="1" fill="#000080"/><rect x="166" y="67" width="1" height="1" fill="#000080"/><rect x="167" y="67" width="7" height="1" fill="#fff"/><rect x="174" y="67" width="1" height="1" fill="#000080"/><rect x="166" y="68" width="9" height="1" fill="#000080"/></g><rect x="149" y="49" width="1" height="26" fill="#a0a0a0"/><rect x="186" y="49" width="1" height="26" fill="#a0a0a0"/><rect x="316" y="49" width="1" height="26" fill="#a0a0a0"/><rect x="384" y="49" width="1" height="26" fill="#a0a0a0"/><g shape-rendering="crispEdges"><rect x="198" y="53" width="6" height="19" fill="#fff"/><rect x="199" y="54" width="4" height="17" fill="#000"/><rect x="200" y="55" width="2" height="15" fill="#909090"/><rect x="205" y="53" width="6" height="19" fill="#fff"/><rect x="206" y="54" width="4" height="17" fill="#000"/><rect x="207" y="55" width="2" height="15" fill="#909090"/></g><rect x="220" y="47" width="31" height="30" fill="url(#dith)"/><rect x="220" y="47" width="31" height="1" fill="#a0a0a0"/><rect x="220" y="47" width="1" height="30" fill="#a0a0a0"/><rect x="282" y="47" width="31" height="30" fill="url(#dith)"/><rect x="282" y="47" width="31" height="1" fill="#a0a0a0"/><rect x="282" y="47" width="1" height="30" fill="#a0a0a0"/><path d="M229.5 57.5L231.75 55.25L236.5 60L241.25 55.25L243.5 57.5L236.5 64.5Z" fill="#fff" stroke="#fff" stroke-width="1.8" stroke-linejoin="round"/><path d="M229.5 57.5L231.75 55.25L236.5 60L241.25 55.25L243.5 57.5L236.5 64.5Z" fill="#909090" stroke="#000" stroke-width="1"/><path d="M229.5 64.5L231.75 62.25L236.5 67L241.25 62.25L243.5 64.5L236.5 71.5Z" fill="#fff" stroke="#fff" stroke-width="1.8" stroke-linejoin="round"/><path d="M229.5 64.5L231.75 62.25L236.5 67L241.25 62.25L243.5 64.5L236.5 71.5Z" fill="#909090" stroke="#000" stroke-width="1"/><path d="M236.5 60 L 236.5 60" /><g shape-rendering="crispEdges"><path d="M264 52h5v1h3v1h1v3h-14v-3h1v-1h4z" fill="#fff"/><rect x="259" y="57" width="15" height="16" fill="#fff"/><rect x="265" y="53" width="3" height="1" fill="#000"/><rect x="261" y="54" width="11" height="1" fill="#000"/><rect x="260" y="55" width="13" height="2" fill="#000"/><rect x="261" y="55" width="11" height="1" fill="#909090"/><rect x="260" y="58" width="13" height="13" fill="#000"/><rect x="261" y="71" width="11" height="1" fill="#000"/><rect x="261" y="59" width="11" height="12" fill="#909090"/><rect x="263" y="60" width="1" height="10" fill="#000"/><rect x="266" y="60" width="1" height="10" fill="#000"/><rect x="269" y="60" width="1" height="10" fill="#000"/></g><g shape-rendering="crispEdges"><rect x="290" y="53" width="17" height="21" fill="#fff"/><rect x="291" y="54" width="15" height="9" fill="#000"/><rect x="292" y="55" width="13" height="7" fill="#8a8a8a"/><rect x="291" y="64" width="15" height="9" fill="#000"/><rect x="292" y="65" width="13" height="7" fill="#8a8a8a"/></g><circle cx="334.5" cy="62.5" r="8.2" fill="#fff"/><rect x="333" y="53" width="3" height="3" fill="#000"/><rect x="334" y="54" width="1" height="1" fill="#909090"/><rect x="333" y="69" width="3" height="3" fill="#000"/><rect x="334" y="70" width="1" height="1" fill="#909090"/><rect x="325" y="61" width="3" height="3" fill="#000"/><rect x="326" y="62" width="1" height="1" fill="#909090"/><rect x="341" y="61" width="3" height="3" fill="#000"/><rect x="342" y="62" width="1" height="1" fill="#909090"/><g transform="rotate(45 334.5 62.5)"><rect x="333" y="53.5" width="3" height="3" fill="#000"/><rect x="334" y="54.5" width="1" height="1" fill="#909090"/><rect x="333" y="68.5" width="3" height="3" fill="#000"/><rect x="334" y="69.5" width="1" height="1" fill="#909090"/><rect x="325.5" y="61" width="3" height="3" fill="#000"/><rect x="326.5" y="62" width="1" height="1" fill="#909090"/><rect x="340.5" y="61" width="3" height="3" fill="#000"/><rect x="341.5" y="62" width="1" height="1" fill="#909090"/></g><circle cx="334.5" cy="62.5" r="6.4" fill="#909090" stroke="#000" stroke-width="1"/><circle cx="334.5" cy="62.5" r="2.9" fill="#fff" stroke="#000" stroke-width="1"/><g fill="#000" stroke="#fff" stroke-width="0.7"><circle cx="365.5" cy="65.9" r="5.7"/><circle cx="365.5" cy="56.8" r="3.6"/><circle cx="359.8" cy="59.9" r="3.2"/><circle cx="371.2" cy="59.9" r="3.2"/></g><g shape-rendering="crispEdges"><rect x="394" y="52" width="17" height="20" fill="#fff"/><rect x="395" y="53" width="15" height="13" fill="#000"/><rect x="396" y="54" width="13" height="11" fill="#fff"/><rect x="397" y="55" width="11" height="9" fill="#c0c0c0"/><rect x="401" y="66" width="3" height="1" fill="#000"/><rect x="395" y="67" width="15" height="4" fill="#000"/><rect x="396" y="68" width="13" height="2" fill="#909090"/></g><g fill="#000"><circle cx="402.5" cy="61.4" r="2.6"/><path d="M398.4 57.4h2M399.4 56.4v2M401.5 56.2h2M402.5 55.2v2M404.5 57.4h2M405.5 56.4v2" stroke="#000" stroke-width="1"/></g><path d="M419 59H428L423.5 64Z" fill="#000"/><g shape-rendering="crispEdges"><rect x="1686" y="52" width="250" height="20" fill="#fff"/><rect x="1686" y="52" width="249" height="1" fill="#a0a0a0"/><rect x="1686" y="52" width="1" height="19" fill="#a0a0a0"/><rect x="1687" y="53" width="248" height="1" fill="#696969"/><rect x="1687" y="53" width="1" height="17" fill="#696969"/><rect x="1688" y="70" width="247" height="1" fill="#f0f0f0"/></g><circle cx="1699.3" cy="60.3" r="2.9" fill="none" stroke="#666" stroke-width="1.3"/><path d="M1697.2 62.5L1694.2 65.5" stroke="#555" stroke-width="1.8" stroke-linecap="round"/><path d="M1704 61.2H1708.5L1706.25 63.5Z" fill="#555"/><path d="M1943.5 57.5H1959.5V58.5L1951.5 66.5L1943.5 58.5Z" fill="#888" stroke="#000" stroke-width="1"/><path d="M1974.5 66.5H1990.5V65.5L1982.5 57.5L1974.5 65.5Z" fill="#888" stroke="#000" stroke-width="1"/><path d="M883.5 99.5L888.5 89.5" stroke="#808080" stroke-width="1" fill="none"/><path d="M888.5 89.5L893.5 99.5H883.5" stroke="#fff" stroke-width="1" fill="none"/><g shape-rendering="crispEdges"><rect x="1975" y="101" width="17" height="658" fill="url(#dith)"/><rect x="1975" y="84" width="17" height="17" fill="#696969"/><rect x="1975" y="84" width="16" height="16" fill="#fff"/><rect x="1976" y="85" width="15" height="15" fill="#a0a0a0"/><rect x="1976" y="85" width="14" height="14" fill="#f0f0f0"/><rect x="1975" y="759" width="17" height="17" fill="#696969"/><rect x="1975" y="759" width="16" height="16" fill="#fff"/><rect x="1976" y="760" width="15" height="15" fill="#a0a0a0"/><rect x="1976" y="760" width="14" height="14" fill="#f0f0f0"/><rect x="1975" y="751" width="17" height="8" fill="#696969"/><rect x="1975" y="751" width="16" height="7" fill="#fff"/><rect x="1976" y="752" width="15" height="6" fill="#a0a0a0"/><rect x="1976" y="752" width="14" height="5" fill="#f0f0f0"/></g><path d="M1979 94H1986L1982.5 90Z" fill="#000"/><path d="M1979 765H1986L1982.5 769Z" fill="#000"/><path d="M58.1 534.9C59 531 61 529.5 63.6 529.5C68 529.5 72 532 75.8 533.6C78 536 78.5 541 78.5 547C79.2 560 79.2 574 79.2 574C78.5 590 77.8 604 77.8 604C79.5 612 81.9 618 81.9 625.8C81 629.5 79.5 630.5 77.8 630.5C76 630.5 74.4 627 74.4 624.4C73.5 628 72 629.8 70.3 629.8C68 629.8 66.3 627 66.3 624.4C64 622 62.2 617.6 62.2 617.6C61 600 59.5 560.7 59.5 560.7C59 550 58.1 540 58.1 534.9Z" fill="#f00"/><path d="M5.2 575.6L26 575" stroke="#f00" stroke-width="8.6" stroke-linecap="round" fill="none"/><path d="M28.6 556L48.8 574.6L26.8 589.3Z" stroke="#f00" stroke-width="7.6" stroke-linejoin="round" fill="none"/></svg>
<div class="a" style="left:1715px;top:57px;line-height:14px;color:#8f8f8f;letter-spacing:-0.45px">Search in traces (Ctrl+F)</div>
</body></html>
